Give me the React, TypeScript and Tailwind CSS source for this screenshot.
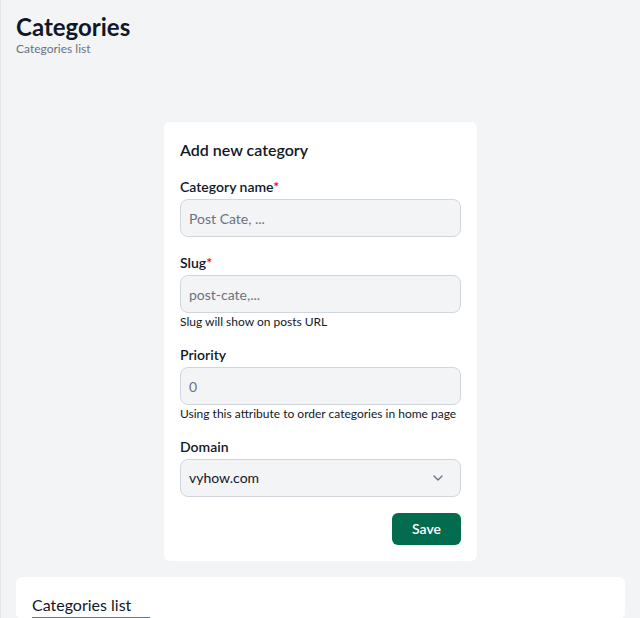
import { ChevronDown } from 'lucide-react';

const Field = ({
    label,
    required,
    placeholder,
    hint,
    className = 'mt-[15px]',
}: {
    label: string;
    required?: boolean;
    placeholder: string;
    hint?: string;
    className?: string;
}) => (
    <div className={className}>
        <label className="block text-sm font-semibold leading-5 text-gray-900 mb-0.5">
            {label}
            {required && <span className="text-red-600">*</span>}
        </label>
        <input
            className="block w-full h-[38px] rounded-lg border border-gray-300 bg-gray-100 px-2 text-sm text-gray-900 placeholder:text-gray-500 outline-none"
            placeholder={placeholder}
        />
        {hint && <p className="text-xs leading-4 text-gray-900 mt-px">{hint}</p>}
    </div>
);

export default function App() {
    return (
        <div
            className="min-h-[618px] bg-gray-100 border-l border-gray-200 px-[15px] pt-[13px]"
            style={{ fontFamily: 'Lato, sans-serif' }}
        >
            <h1 className="text-2xl font-bold leading-7 text-gray-900">Categories</h1>
            <p className="text-xs leading-4 text-gray-500">Categories list</p>

            <div className="mt-[65px] mx-auto w-[313px] rounded-md bg-white p-4">
                <h2 className="text-base font-semibold leading-6 text-gray-900">Add new category</h2>
                <Field label="Category name" required placeholder="Post Cate, ..." />
                <Field
                    label="Slug"
                    required
                    placeholder="post-cate,..."
                    hint="Slug will show on posts URL"
                    className="mt-4"
                />
                <Field
                    label="Priority"
                    placeholder="0"
                    hint="Using this attribute to order categories in home page"
                />
                <div className="mt-[15px]">
                    <label className="block text-sm font-semibold leading-5 text-gray-900 mb-0.5">Domain</label>
                    <div className="flex items-center justify-between h-[38px] rounded-lg border border-gray-300 bg-gray-100 pl-2 pr-3.5">
                        <span className="text-sm text-gray-900">vyhow.com</span>
                        <ChevronDown className="w-4 h-4 text-gray-500" strokeWidth={2} />
                    </div>
                </div>
                <div className="flex justify-end mt-4">
                    <button className="h-8 w-[69px] rounded-md bg-[#046c4e] text-sm font-semibold text-white">
                        Save
                    </button>
                </div>
            </div>

            <div className="mt-4 rounded-md bg-white px-4 pt-4">
                <div className="w-[118px] border-b-2 border-gray-500 text-base leading-6 text-gray-900">
                    Categories list
                </div>
            </div>
        </div>
    );
}
